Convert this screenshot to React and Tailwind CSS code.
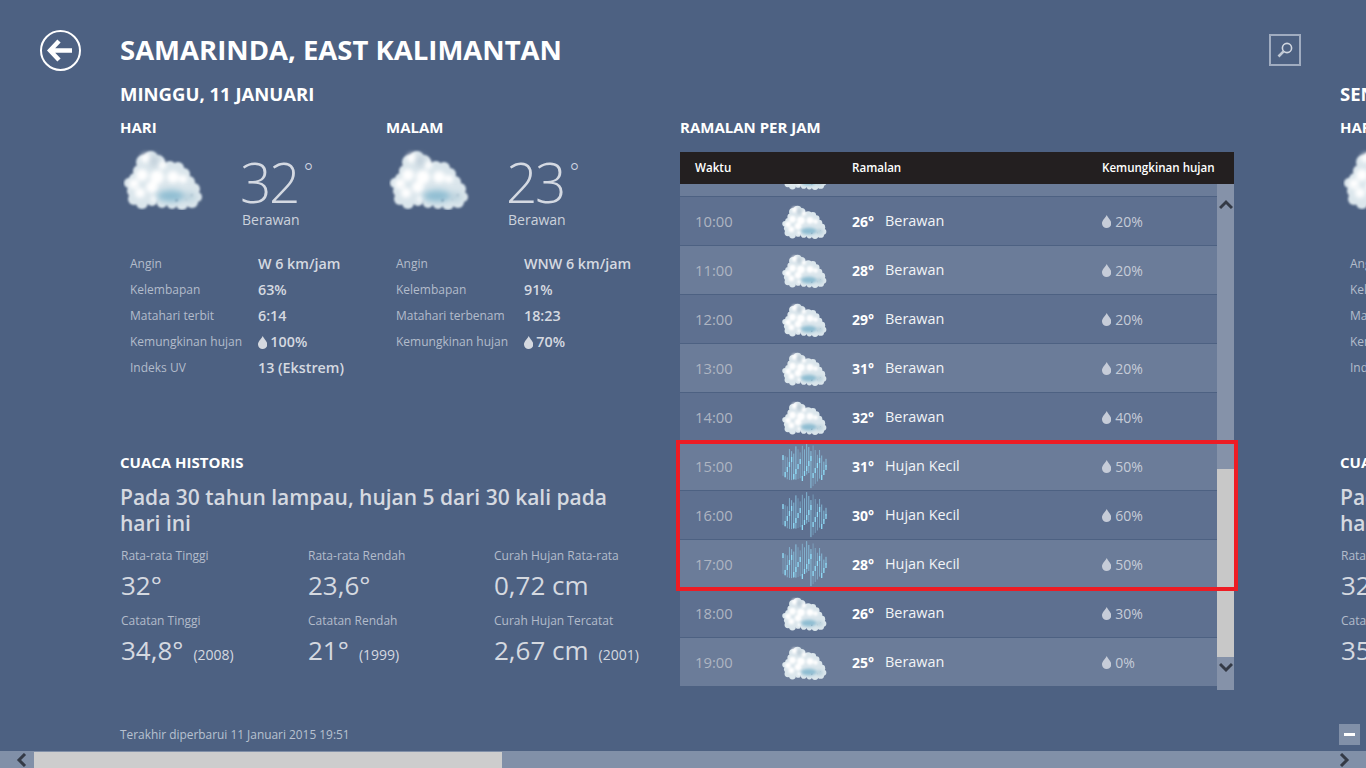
import React, { useId } from "react";

const puffs = [
  [41, 21, 7], [33, 25, 7], [48, 25, 7], [38, 31, 10], [29, 34, 6], [52, 33, 8], [60, 30, 6], [68, 31, 6], [74, 37, 6],
  [79, 45, 6], [84, 52, 6], [87, 60, 5], [82, 65, 6], [72, 67, 6], [62, 67, 5], [52, 66, 5], [42, 64, 5], [32, 66, 6],
  [24, 62, 6], [23, 54, 6], [19, 46, 5], [25, 42, 6], [34, 44, 9], [47, 46, 11], [62, 44, 11], [72, 52, 11], [56, 57, 11], [40, 56, 10], [30, 54, 7],
];
const lights = [[32, 38, 6], [24, 47, 5], [47, 40, 7], [63, 40, 6], [73, 42, 4], [30, 56, 5], [42, 50, 6], [36, 21, 5], [52, 28, 4], [44, 62, 3]];

const Cloud = ({ w = 86, h = 62 }) => {
  const id = useId();
  return (
    <svg width={w} height={h} viewBox="14 11 84 62" className="block shrink-0">
      <defs>
        <filter id={id + "a"} x="-20%" y="-20%" width="140%" height="140%"><feGaussianBlur stdDeviation="0.8" /></filter>
        <filter id={id + "b"} x="-40%" y="-40%" width="180%" height="180%"><feGaussianBlur stdDeviation="3" /></filter>
        <filter id={id + "c"} x="-40%" y="-40%" width="180%" height="180%"><feGaussianBlur stdDeviation="2.2" /></filter>
      </defs>
      <g filter={`url(#${id}a)`} fill="#dbe6ec">
        {puffs.map(([x, y, r], i) => <circle key={i} cx={x} cy={y} r={r} />)}
      </g>
      <g filter={`url(#${id}c)`} fill="#ffffff">
        {lights.map(([x, y, r], i) => <circle key={i} cx={x} cy={y} r={r} />)}
      </g>
      <g filter={`url(#${id}b)`}>
        <ellipse cx="61" cy="59" rx="14" ry="6" fill="#8fbdd2" />
        <ellipse cx="80" cy="60" rx="6" ry="5" fill="#bcd3de" />
        <ellipse cx="44" cy="24" rx="4" ry="6" fill="#bfcdd8" />
      </g>
    </svg>
  );
};

const rainLines = Array.from({ length: 21 }, (_, i) => {
  const x = 1 + i * 2.15;
  const c = Math.abs(i - 10) / 10.5;
  const env = 23 * Math.sqrt(1 - c * c * 0.9);
  const a = (i * 37) % 11;
  const b = (i * 53) % 13;
  return { x, y1: 23 - env + a * 0.9, y2: 23 + env - b * 1.3, o: 0.4 + ((i * 29) % 7) / 14 };
});

const Rain = () => (
  <svg width="46" height="46" viewBox="0 0 46 46" className="block shrink-0">
    {rainLines.map((l, i) => (
      <line key={i} x1={l.x} x2={l.x} y1={l.y1} y2={l.y2} stroke="#8fd2ef" strokeWidth="1" opacity={l.o} />
    ))}
    {rainLines.map((l, i) => (
      <line key={"d" + i} x1={l.x} x2={l.x} y1={12 + (i * 17) % 22} y2={17 + (i * 17) % 22} stroke="#8fdcf8" strokeWidth="1.3" />
    ))}
  </svg>
);

const Drop = ({ c = "#c6ccd8", s = 13 }) => (
  <svg width={s * 0.72} height={s} viewBox="0 0 8 11" preserveAspectRatio="none" className="block shrink-0">
    <path d="M4 0 C4.8 2 8 4.6 8 7.2 C8 9.4 6.2 11 4 11 C1.8 11 0 9.4 0 7.2 C0 4.6 3.2 2 4 0 Z" fill={c} />
  </svg>
);

const Chevron = ({ dir }) => {
  const d = { up: "M1 9 L7 3 L13 9", down: "M1 3 L7 9 L13 3", left: "M9 1 L3 7 L9 13", right: "M4 1 L10 7 L4 13" }[dir];
  return (
    <svg width="14" height={dir === "up" || dir === "down" ? 12 : 14} viewBox={dir === "up" || dir === "down" ? "0 0 14 12" : "0 0 14 14"} className="block">
      <path d={d} fill="none" stroke="#343a46" strokeWidth="3" />
    </svg>
  );
};

const hours = [
  ["09:00", "26°", "Berawan", "20%"],
  ["10:00", "26°", "Berawan", "20%"],
  ["11:00", "28°", "Berawan", "20%"],
  ["12:00", "29°", "Berawan", "20%"],
  ["13:00", "31°", "Berawan", "20%"],
  ["14:00", "32°", "Berawan", "40%"],
  ["15:00", "31°", "Hujan Kecil", "50%"],
  ["16:00", "30°", "Hujan Kecil", "60%"],
  ["17:00", "28°", "Hujan Kecil", "50%"],
  ["18:00", "26°", "Berawan", "30%"],
  ["19:00", "25°", "Berawan", "0%"],
];

const HalfDay = ({ title, temp, rows, width }) => (
  <div className={width}>
    <div className="text-[15px] leading-[18px] font-bold text-white">{title}</div>
    <div className="flex mt-[14px] h-[79px]">
      <div className="w-[120px] pl-[3px] -mt-[2px]"><Cloud /></div>
      <div>
        <div className="flex items-start h-[56px]">
          <span className="text-[55px] leading-[60px] mt-[2px] font-light text-[#d4d9e2] tracking-[-2.5px]">{temp}</span>
          <span className="text-[22px] leading-[26px] font-light text-[#d4d9e2] ml-[6px] mt-[8px]">°</span>
        </div>
        <div className="text-[14px] leading-[20px] text-[#ccd2dc] ml-[2px] mt-[4px]">Berawan</div>
      </div>
    </div>
    <div className="mt-[22px] pl-[10px]">
      {rows.map(([k, v, drop]) => (
        <div key={k} className="flex items-center h-[26px]">
          <span className="w-[128px] text-[12px] text-[#b3bccb] whitespace-nowrap">{k}</span>
          {drop && <span className="mr-[3px]"><Drop c="#d5d9e0" s={13} /></span>}
          <span className="text-[14.3px] font-semibold text-[#d5d9e0] whitespace-nowrap">{v}</span>
        </div>
      ))}
    </div>
  </div>
);

const Stat = ({ label, value, year }) => (
  <div className="h-[65px]">
    <div className="text-[12px] leading-[18px] text-[#b3bccb] whitespace-nowrap">{label}</div>
    <div className="flex items-baseline mt-[2px] whitespace-nowrap">
      <span className="text-[26px] leading-[36px] text-[#d5d9e0]">{value}</span>
      {year && <span className="text-[14px] text-[#d5d9e0] ml-[10px]">{year}</span>}
    </div>
  </div>
);

const DayInfo = ({ date, day, night, dayRows, nightRows, stats }) => (
  <div className="w-[560px] shrink-0">
    <div className="text-[18.5px] leading-[20px] font-bold text-white whitespace-nowrap">{date}</div>
    <div className="flex mt-[14px] h-[335px]">
      <HalfDay title="HARI" temp={day} rows={dayRows} width="w-[266px] shrink-0" />
      <HalfDay title="MALAM" temp={night} rows={nightRows} width="w-[270px] shrink-0" />
    </div>
    <div className="text-[15px] leading-[18px] font-bold text-white">CUACA HISTORIS</div>
    <div className="mt-[13px] w-[500px] text-[21px] leading-[26px] font-semibold text-[#d5d9e0]">
      Pada 30 tahun lampau, hujan 5 dari 30 kali pada hari ini
    </div>
    <div className="grid grid-cols-[187px_186px_1fr] mt-[11px] pl-[1px]">
      {stats.map((s) => <Stat key={s[0]} label={s[0]} value={s[1]} year={s[2]} />)}
    </div>
  </div>
);

const dayRows = [["Angin", "W 6 km/jam"], ["Kelembapan", "63%"], ["Matahari terbit", "6:14"], ["Kemungkinan hujan", "100%", true], ["Indeks UV", "13 (Ekstrem)"]];
const nightRows = [["Angin", "WNW 6 km/jam"], ["Kelembapan", "91%"], ["Matahari terbenam", "18:23"], ["Kemungkinan hujan", "70%", true]];
const stats = [
  ["Rata-rata Tinggi", "32°"], ["Rata-rata Rendah", "23,6°"], ["Curah Hujan Rata-rata", "0,72 cm"],
  ["Catatan Tinggi", "34,8°", "(2008)"], ["Catatan Rendah", "21°", "(1999)"], ["Curah Hujan Tercatat", "2,67 cm", "(2001)"],
];
const stats2 = [
  ["Rata-rata Tinggi", "32°"], ["Rata-rata Rendah", "23,6°"], ["Curah Hujan Rata-rata", "0,72 cm"],
  ["Catatan Tinggi", "35,0°", "(2005)"], ["Catatan Rendah", "21°", "(1999)"], ["Curah Hujan Tercatat", "2,67 cm", "(2001)"],
];

const Hourly = () => (
  <div className="w-[554px] shrink-0 mt-[34px]">
    <div className="text-[15px] leading-[18px] font-bold text-white whitespace-nowrap">RAMALAN PER JAM</div>
    <div className="relative mt-[16px]">
      <div className="flex items-center h-[32px] bg-[#231f20] text-[11.6px] font-semibold text-white">
        <span className="w-[172px] pl-[15px]">Waktu</span>
        <span className="w-[250px]">Ramalan</span>
        <span>Kemungkinan hujan</span>
      </div>
      <div className="flex items-start">
        <div className="w-[537px] h-[502px] overflow-hidden">
          <div className="-mt-[36px]">
            {hours.map(([t, deg, desc, pct], i) => (
              <div key={t} className={`flex items-center h-[49px] border-b border-[#4d6182] ${i % 2 ? "bg-[#5e7090]" : "bg-[#6b7c99]"}`}>
                <span className="w-[102px] pl-[15px] text-[14.8px] text-[#aeb5c2]">{t}</span>
                <span className="w-[70px] flex justify-start">
                  {desc === "Berawan" ? <Cloud w={48} h={35} /> : <Rain />}
                </span>
                <span className="w-[33px] text-[14px] font-bold text-white">{deg}</span>
                <span className="w-[217px] text-[14.4px] text-[#f2f4f7]">{desc}</span>
                <span className="mr-[4px]"><Drop /></span>
                <span className="text-[14px] text-[#c6ccd8]">{pct}</span>
              </div>
            ))}
          </div>
        </div>
        <div className="w-[17px] h-[506px] bg-[#8592a9] flex flex-col">
          <div className="h-[285px] flex justify-center pt-[15px]"><Chevron dir="up" /></div>
          <div className="h-[188px] bg-[#c8c8c8]" />
          <div className="flex justify-center pt-[4px]"><Chevron dir="down" /></div>
        </div>
      </div>
      <div className="absolute left-[-4px] top-[288px] w-[562px] h-[151px] border-[4px] border-[#ed1c24] pointer-events-none" />
    </div>
  </div>
);

export default function App() {
  return (
    <div className="relative w-[1366px] h-[768px] overflow-hidden flex flex-col bg-[#4d6182] font-['Open_Sans','Noto_Sans',sans-serif]">
      <div className="flex-1 min-h-0 overflow-hidden">
        <header className="flex items-center h-[84px] pt-[16px]">
          <div className="ml-[40px] w-[41px] h-[41px] rounded-full border-2 border-white flex items-center justify-center">
            <svg width="27" height="23" viewBox="0 0 27 23">
              <path d="M12 2 L3 11.5 L12 21 M3.5 11.5 H25" fill="none" stroke="#fff" strokeWidth="4.5" />
            </svg>
          </div>
          <h1 className="ml-[39px] text-[27.5px] leading-[34px] font-bold text-white whitespace-nowrap">SAMARINDA, EAST KALIMANTAN</h1>
          <div className="ml-auto mr-[65px] w-[32px] h-[32px] border-2 border-[#a0acc0] flex items-center justify-center">
            <svg width="18" height="18" viewBox="0 0 18 18">
              <circle cx="11" cy="7" r="4.6" fill="none" stroke="#d0d6e0" strokeWidth="1.6" />
              <path d="M7.6 10.4 L2.5 15.5" stroke="#c0c8d4" strokeWidth="2.6" />
            </svg>
          </div>
        </header>
        <div className="flex pl-[120px]">
          <div className="flex w-[1220px] shrink-0">
            <DayInfo date="MINGGU, 11 JANUARI" day="32" night="23" dayRows={dayRows} nightRows={nightRows} stats={stats} />
            <Hourly />
          </div>
          <DayInfo date="SENIN, 12 JANUARI" day="31" night="24" dayRows={dayRows} nightRows={nightRows} stats={stats2} />
        </div>
        <div className="pl-[120px] mt-[36px] text-[11.9px] leading-[16px] text-[#b8c1d0]">Terakhir diperbarui 11 Januari 2015 19:51</div>
      </div>
      <div className="h-[17px] shrink-0 bg-[#8190a8] flex items-center">
        <div className="w-[34px] pl-[16px]"><Chevron dir="left" /></div>
        <div className="w-[468px] h-[16px] bg-[#cdcdcd]" />
        <div className="ml-auto w-[29px]"><Chevron dir="right" /></div>
      </div>
      <div className="absolute left-[1339px] top-[724px] w-[21px] h-[21px] bg-[#8190a8] flex items-center justify-center">
        <div className="w-[11px] h-[3px] bg-white" />
      </div>
    </div>
  );
}
